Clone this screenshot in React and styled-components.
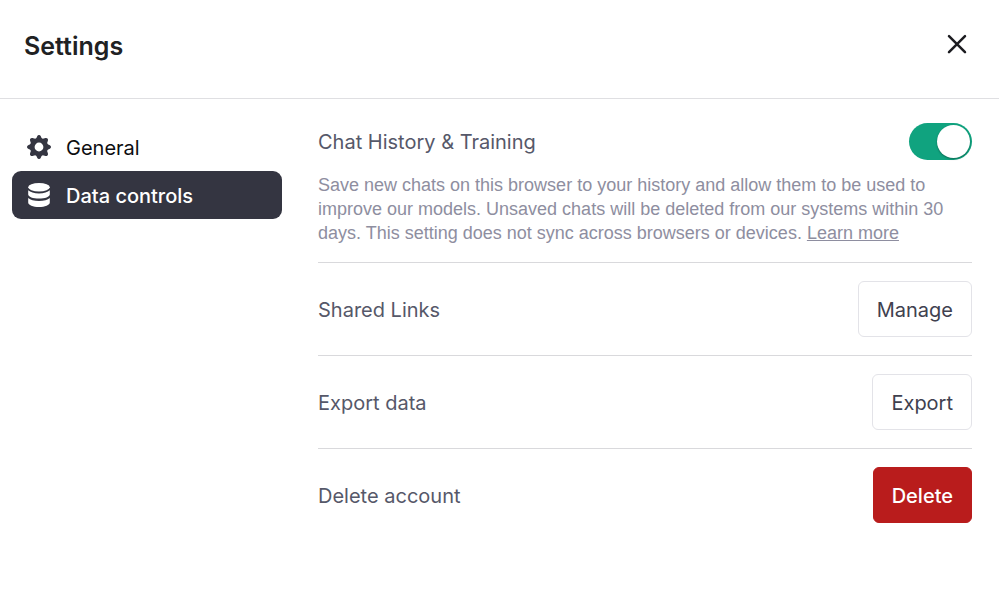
import React, { useState } from "react";
import styled, { createGlobalStyle, css } from "styled-components";

const GlobalStyle = createGlobalStyle`
  *, *::before, *::after { box-sizing: border-box; }
  body {
    margin: 0;
    background: #fff;
    font-family: Inter, "Liberation Sans", sans-serif;
    font-size: 20px;
    line-height: 28px;
  }
  button, input { font: inherit; margin: 0; }
`;

const Header = styled.header`
  display: flex;
  align-items: center;
  justify-content: space-between;
  padding: 28px 30px 34px 24px;
  border-bottom: 1px solid #dfdfe2;
`;

const Title = styled.h2`
  margin: 0;
  color: #202123;
  font-size: 25px;
  font-weight: 600;
  line-height: 36px;
`;

const CloseButton = styled.button`
  display: flex;
  padding: 0;
  border: 0;
  background: none;
  color: #1c1c20;
  cursor: pointer;
`;

const Body = styled.main`
  display: grid;
  grid-template-columns: 270px minmax(0, 1fr);
  gap: 36px;
  padding: 24px 27px 24px 12px;
`;

const Tabs = styled.nav`
  display: flex;
  flex-direction: column;
`;

const Tab = styled.button`
  display: flex;
  align-items: center;
  gap: 15px;
  height: 48px;
  padding: 0 15px;
  border: 0;
  border-radius: 9px;
  background: none;
  color: #0d0d10;
  text-align: left;
  cursor: pointer;

  svg { color: #343541; }

  ${({ $active }) =>
    $active &&
    css`
      background: #343541;
      color: #fff;
      font-weight: 500;
      svg { color: #fff; }
    `}
`;

const TabLabel = styled.span`
  padding-top: 2px;
`;

const Panel = styled.section`
  color: #565869;
`;

const Setting = styled.div`
  padding-bottom: 17px;
`;

const Row = styled.div`
  display: flex;
  align-items: center;
  justify-content: space-between;
`;

const ActionRow = styled(Row)`
  padding: 18px 0;
  border-top: 1px solid #d9d9dc;
`;

const ActionLabel = styled.span`
  padding-top: 2px;
`;

const Switch = styled.input.attrs({ type: "checkbox", role: "switch" })`
  appearance: none;
  display: flex;
  align-items: center;
  width: 63px;
  height: 37px;
  padding: 2px;
  border-radius: 19px;
  background: #c5c5d2;
  cursor: pointer;

  &::before {
    content: "";
    width: 33px;
    height: 33px;
    border-radius: 50%;
    background: #fff;
    box-shadow: 0 1px 2px rgba(0, 0, 0, 0.35);
  }

  &:checked {
    justify-content: flex-end;
    background: #10a37f;
  }
`;

const Description = styled.p`
  margin: 13px 0 0;
  color: #8e8ea0;
  font-family: "Liberation Sans", Arial, sans-serif;
  font-size: 18px;
  line-height: 24px;
`;

const TextLink = styled.a`
  color: inherit;
  text-decoration: underline;
`;

const Button = styled.button`
  height: 56px;
  padding: 2px 18px 0;
  border: 1px solid ${({ $danger }) => ($danger ? "#b91c1c" : "#e3e3e8")};
  border-radius: 6px;
  background: ${({ $danger }) => ($danger ? "#b91c1c" : "#fff")};
  color: ${({ $danger }) => ($danger ? "#fff" : "#40414f")};
  font-weight: ${({ $danger }) => ($danger ? 500 : 400)};
  cursor: pointer;
`;

function CloseIcon() {
  return (
    <svg width="24" height="24" viewBox="0 0 24 24" fill="none" stroke="currentColor" strokeWidth="2.5" strokeLinecap="round" aria-hidden="true">
      <path d="M4 2.2 20 18.2M20 2.2 4 18.2" />
    </svg>
  );
}

function GearIcon() {
  return (
    <svg width="24" height="24" viewBox="0 0 24 24" fill="currentColor" aria-hidden="true">
      <path
        fillRule="evenodd"
        d="M12 3a9 9 0 1 0 0 18 9 9 0 0 0 0-18ZM12 7.600a4.400 4.400 0 1 1 0 8.800 4.400 4.400 0 0 1 0-8.800Z"
      />
      {[0, 45, 90, 135, 180, 225, 270, 315].map((angle) => (
        <path key={angle} transform={`rotate(${angle} 12 12)`} d="M8.200 4.200C9.300 3.400 9.600 2.500 10.200 1.200 10.600.4 11.200 0 12 0s1.400.4 1.800 1.200C14.400 2.500 14.700 3.400 15.800 4.200Z" />
      ))}
    </svg>
  );
}

function DatabaseIcon() {
  return (
    <svg width="24" height="24" viewBox="0 0 24 24" fill="currentColor" aria-hidden="true">
      <ellipse cx="12" cy="4.200" rx="10.800" ry="4.200" />
      <path d="M1.200 7.200c2 2 6 3.200 10.800 3.200S20.800 9.200 22.800 7.200V11.400c0 2.200-4.800 4.200-10.800 4.200S1.200 13.600 1.200 11.400Z" />
      <path d="M1.200 15c2 2 6 3 10.800 3s8.800-1 10.800-3v4.500c0 2.400-4.800 4.500-10.800 4.500S1.200 21.900 1.200 19.500Z" />
    </svg>
  );
}

const TABS = [
  { name: "General", Icon: GearIcon },
  { name: "Data controls", Icon: DatabaseIcon },
];

const ACTIONS = [
  { label: "Shared Links", action: "Manage" },
  { label: "Export data", action: "Export" },
  { label: "Delete account", action: "Delete", danger: true },
];

export default function App() {
  const [history, setHistory] = useState(true);
  const [tab, setTab] = useState("Data controls");

  return (
    <>
      <GlobalStyle />
      <Header>
        <Title>Settings</Title>
        <CloseButton type="button" aria-label="Close">
          <CloseIcon />
        </CloseButton>
      </Header>
      <Body>
        <Tabs aria-label="Settings sections">
          {TABS.map(({ name, Icon }) => (
            <Tab key={name} type="button" $active={name === tab} onClick={() => setTab(name)}>
              <Icon />
              <TabLabel>{name}</TabLabel>
            </Tab>
          ))}
        </Tabs>
        <Panel>
          <Setting>
            <Row>
              <label htmlFor="chat-history">Chat History &amp; Training</label>
              <Switch id="chat-history" checked={history} onChange={(e) => setHistory(e.target.checked)} />
            </Row>
            <Description>
              Save new chats on this browser to your history and allow them to be used to improve our models.
              Unsaved chats will be deleted from our systems within 30 days. This setting does not sync across
              browsers or devices. <TextLink href="#learn-more">Learn more</TextLink>
            </Description>
          </Setting>
          {ACTIONS.map(({ label, action, danger }) => (
            <ActionRow key={label}>
              <ActionLabel>{label}</ActionLabel>
              <Button type="button" $danger={danger} aria-label={`${action}: ${label}`}>
                {action}
              </Button>
            </ActionRow>
          ))}
        </Panel>
      </Body>
    </>
  );
}
